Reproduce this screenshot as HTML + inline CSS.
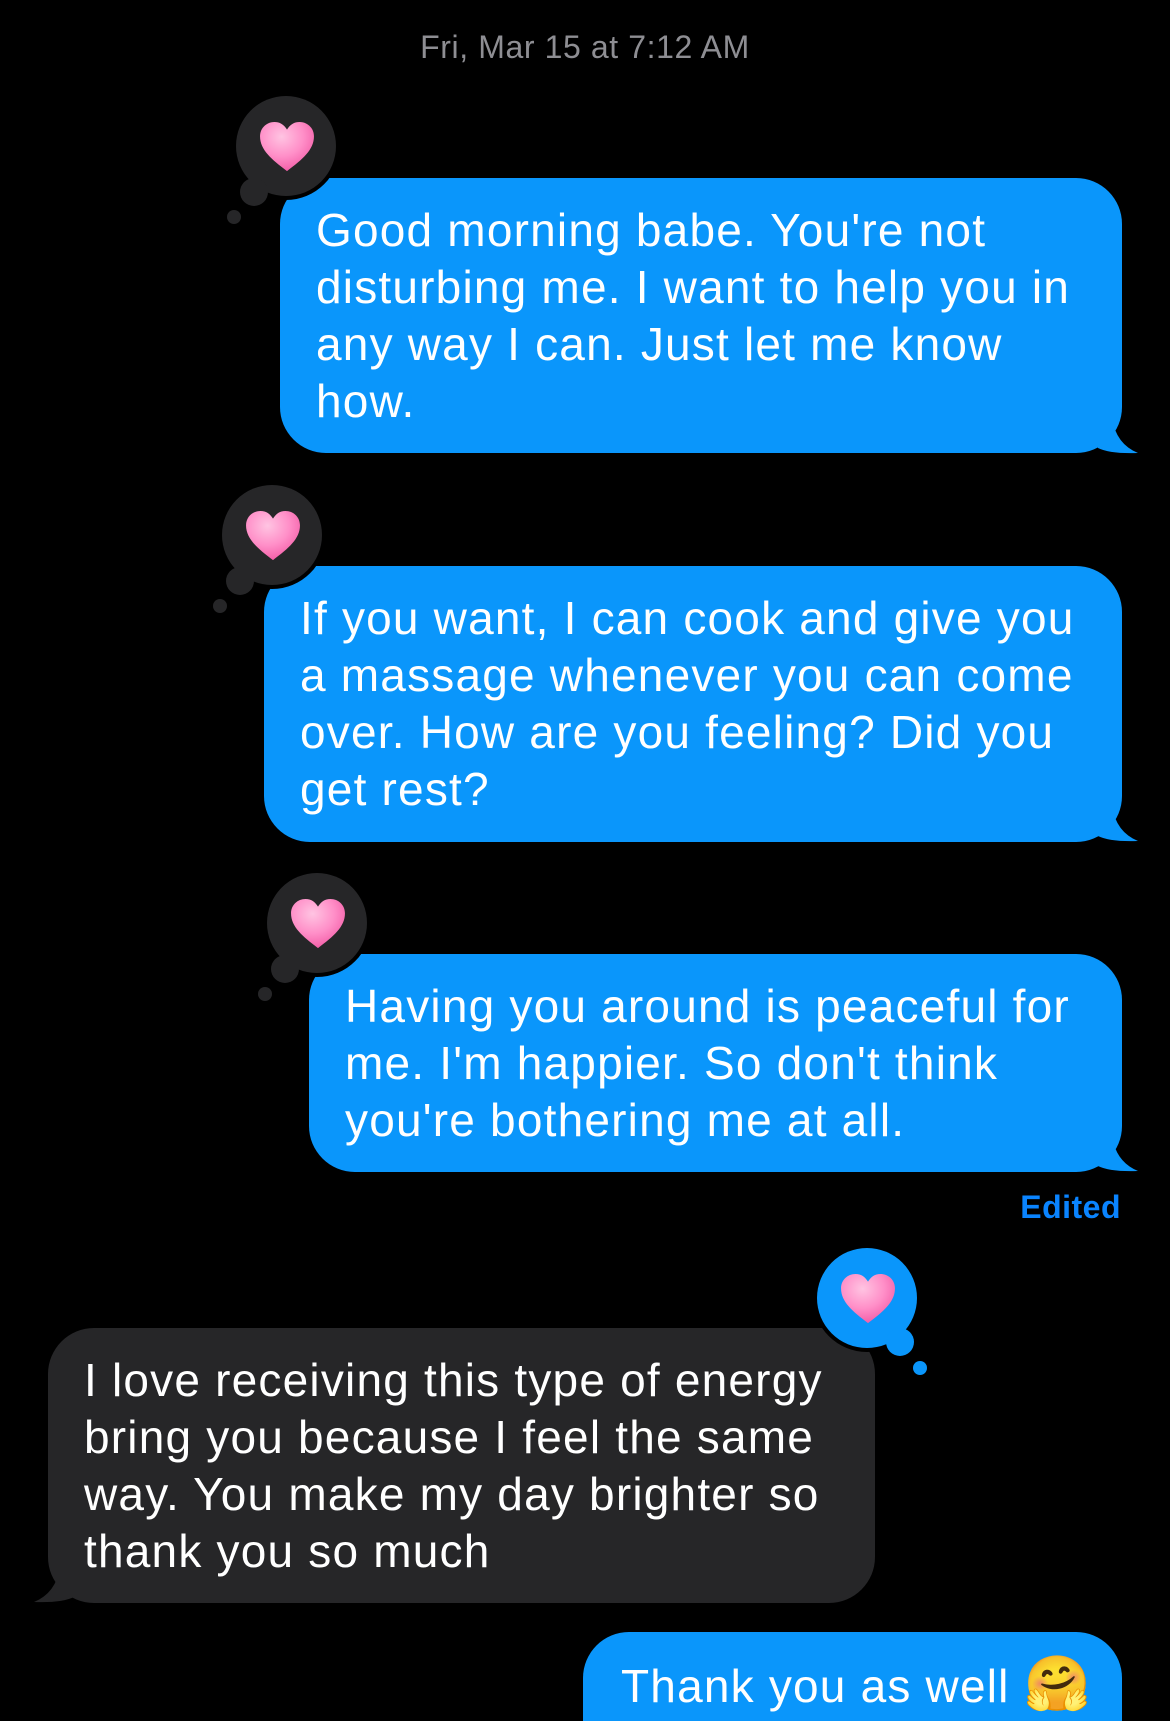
<!DOCTYPE html>
<html><head><meta charset="utf-8"><style>
html,body{margin:0;padding:0;background:#000;width:1170px;height:1721px;overflow:hidden;position:relative;font-family:"Liberation Sans","Noto Sans CJK JP",sans-serif}
.date{position:absolute;top:29px;left:0;width:1170px;text-align:center;color:#8e8e93;font-size:32px;letter-spacing:0.6px}
.b{position:absolute;border-radius:46px;font-size:46px;letter-spacing:1.2px;line-height:57px;color:#fff;box-sizing:border-box;padding:24px 0 0 36px;white-space:nowrap}
.blue{background:#0a96fb}
.gray{background:#262628}
.tail{position:absolute}
.edited{position:absolute;right:49px;top:1189px;color:#0a84ff;font-size:32px;font-weight:bold;letter-spacing:0.5px}
.r{position:absolute}
</style></head><body>
<div class="date">Fri, Mar 15 at 7:12 AM</div>

<svg width="0" height="0" style="position:absolute"><defs>
<radialGradient id="hg" cx="0.4" cy="0.3" r="0.8"><stop offset="0" stop-color="#ffc4e2"/><stop offset="0.5" stop-color="#ff8fc8"/><stop offset="1" stop-color="#f0509e"/></radialGradient>
<symbol id="heart" viewBox="0 0 60 54"><path d="M30 52C14 40 2 30 2 16 2 7 9 1 17 1c6 0 10 3 13 8 3-5 7-8 13-8 8 0 15 6 15 15 0 14-12 24-28 36z" fill="url(#hg)"/></symbol>
</defs></svg>

<div class="b blue" style="left:280px;top:178px;width:842px;height:275px">Good morning babe. You're not<br>disturbing me. I want to help you in<br>any way I can. Just let me know<br>how.</div>
<svg class="tail" style="left:1090px;top:418px" width="50" height="36"><path d="M0 0 L22 0 Q26 26 48 35 Q20 36 8 30 Z" fill="#0a96fb"/></svg>
<svg class="r" style="left:222px;top:88px" width="130" height="140"><circle cx="64" cy="58" r="54" fill="#000"/><circle cx="32" cy="104" r="18" fill="#000"/><circle cx="64" cy="58" r="50" fill="#262628"/><circle cx="32" cy="104" r="14" fill="#262628"/><circle cx="12" cy="129" r="7" fill="#262628"/><use href="#heart" x="36" y="33" width="58" height="52"/></svg>

<div class="b blue" style="left:264px;top:566px;width:858px;height:276px">If you want, I can cook and give you<br>a massage whenever you can come<br>over. How are you feeling? Did you<br>get rest?</div>
<svg class="tail" style="left:1090px;top:806px" width="50" height="36"><path d="M0 0 L22 0 Q26 26 48 35 Q20 36 8 30 Z" fill="#0a96fb"/></svg>
<svg class="r" style="left:208px;top:477px" width="130" height="140"><circle cx="64" cy="58" r="54" fill="#000"/><circle cx="32" cy="104" r="18" fill="#000"/><circle cx="64" cy="58" r="50" fill="#262628"/><circle cx="32" cy="104" r="14" fill="#262628"/><circle cx="12" cy="129" r="7" fill="#262628"/><use href="#heart" x="36" y="33" width="58" height="52"/></svg>

<div class="b blue" style="left:309px;top:954px;width:813px;height:218px">Having you around is peaceful for<br>me. I'm happier. So don't think<br>you're bothering me at all.</div>
<svg class="tail" style="left:1090px;top:1136px" width="50" height="36"><path d="M0 0 L22 0 Q26 26 48 35 Q20 36 8 30 Z" fill="#0a96fb"/></svg>
<svg class="r" style="left:253px;top:865px" width="130" height="140"><circle cx="64" cy="58" r="54" fill="#000"/><circle cx="32" cy="104" r="18" fill="#000"/><circle cx="64" cy="58" r="50" fill="#262628"/><circle cx="32" cy="104" r="14" fill="#262628"/><circle cx="12" cy="129" r="7" fill="#262628"/><use href="#heart" x="36" y="33" width="58" height="52"/></svg>

<div class="edited">Edited</div>

<div class="b gray" style="left:48px;top:1328px;width:827px;height:275px">I love receiving this type of energy<br>bring you because I feel the same<br>way. You make my day brighter so<br>thank you so much</div>
<svg class="tail" style="left:32px;top:1567px" width="50" height="36"><path d="M50 0 L28 0 Q24 26 2 35 Q30 36 42 30 Z" fill="#262628"/></svg>
<svg class="r" style="left:800px;top:1240px" width="140" height="140"><circle cx="67" cy="58" r="54" fill="#000"/><circle cx="100" cy="102" r="18" fill="#000"/><circle cx="67" cy="58" r="50" fill="#0a96fb"/><circle cx="100" cy="102" r="14" fill="#0a96fb"/><circle cx="120" cy="128" r="7" fill="#0a96fb"/><use href="#heart" x="39" y="33" width="58" height="52"/></svg>

<div class="b blue" style="left:583px;top:1632px;width:539px;height:140px;padding-left:38px">Thank you as well <span style="font-size:54px">🤗</span></div>
</body></html>
